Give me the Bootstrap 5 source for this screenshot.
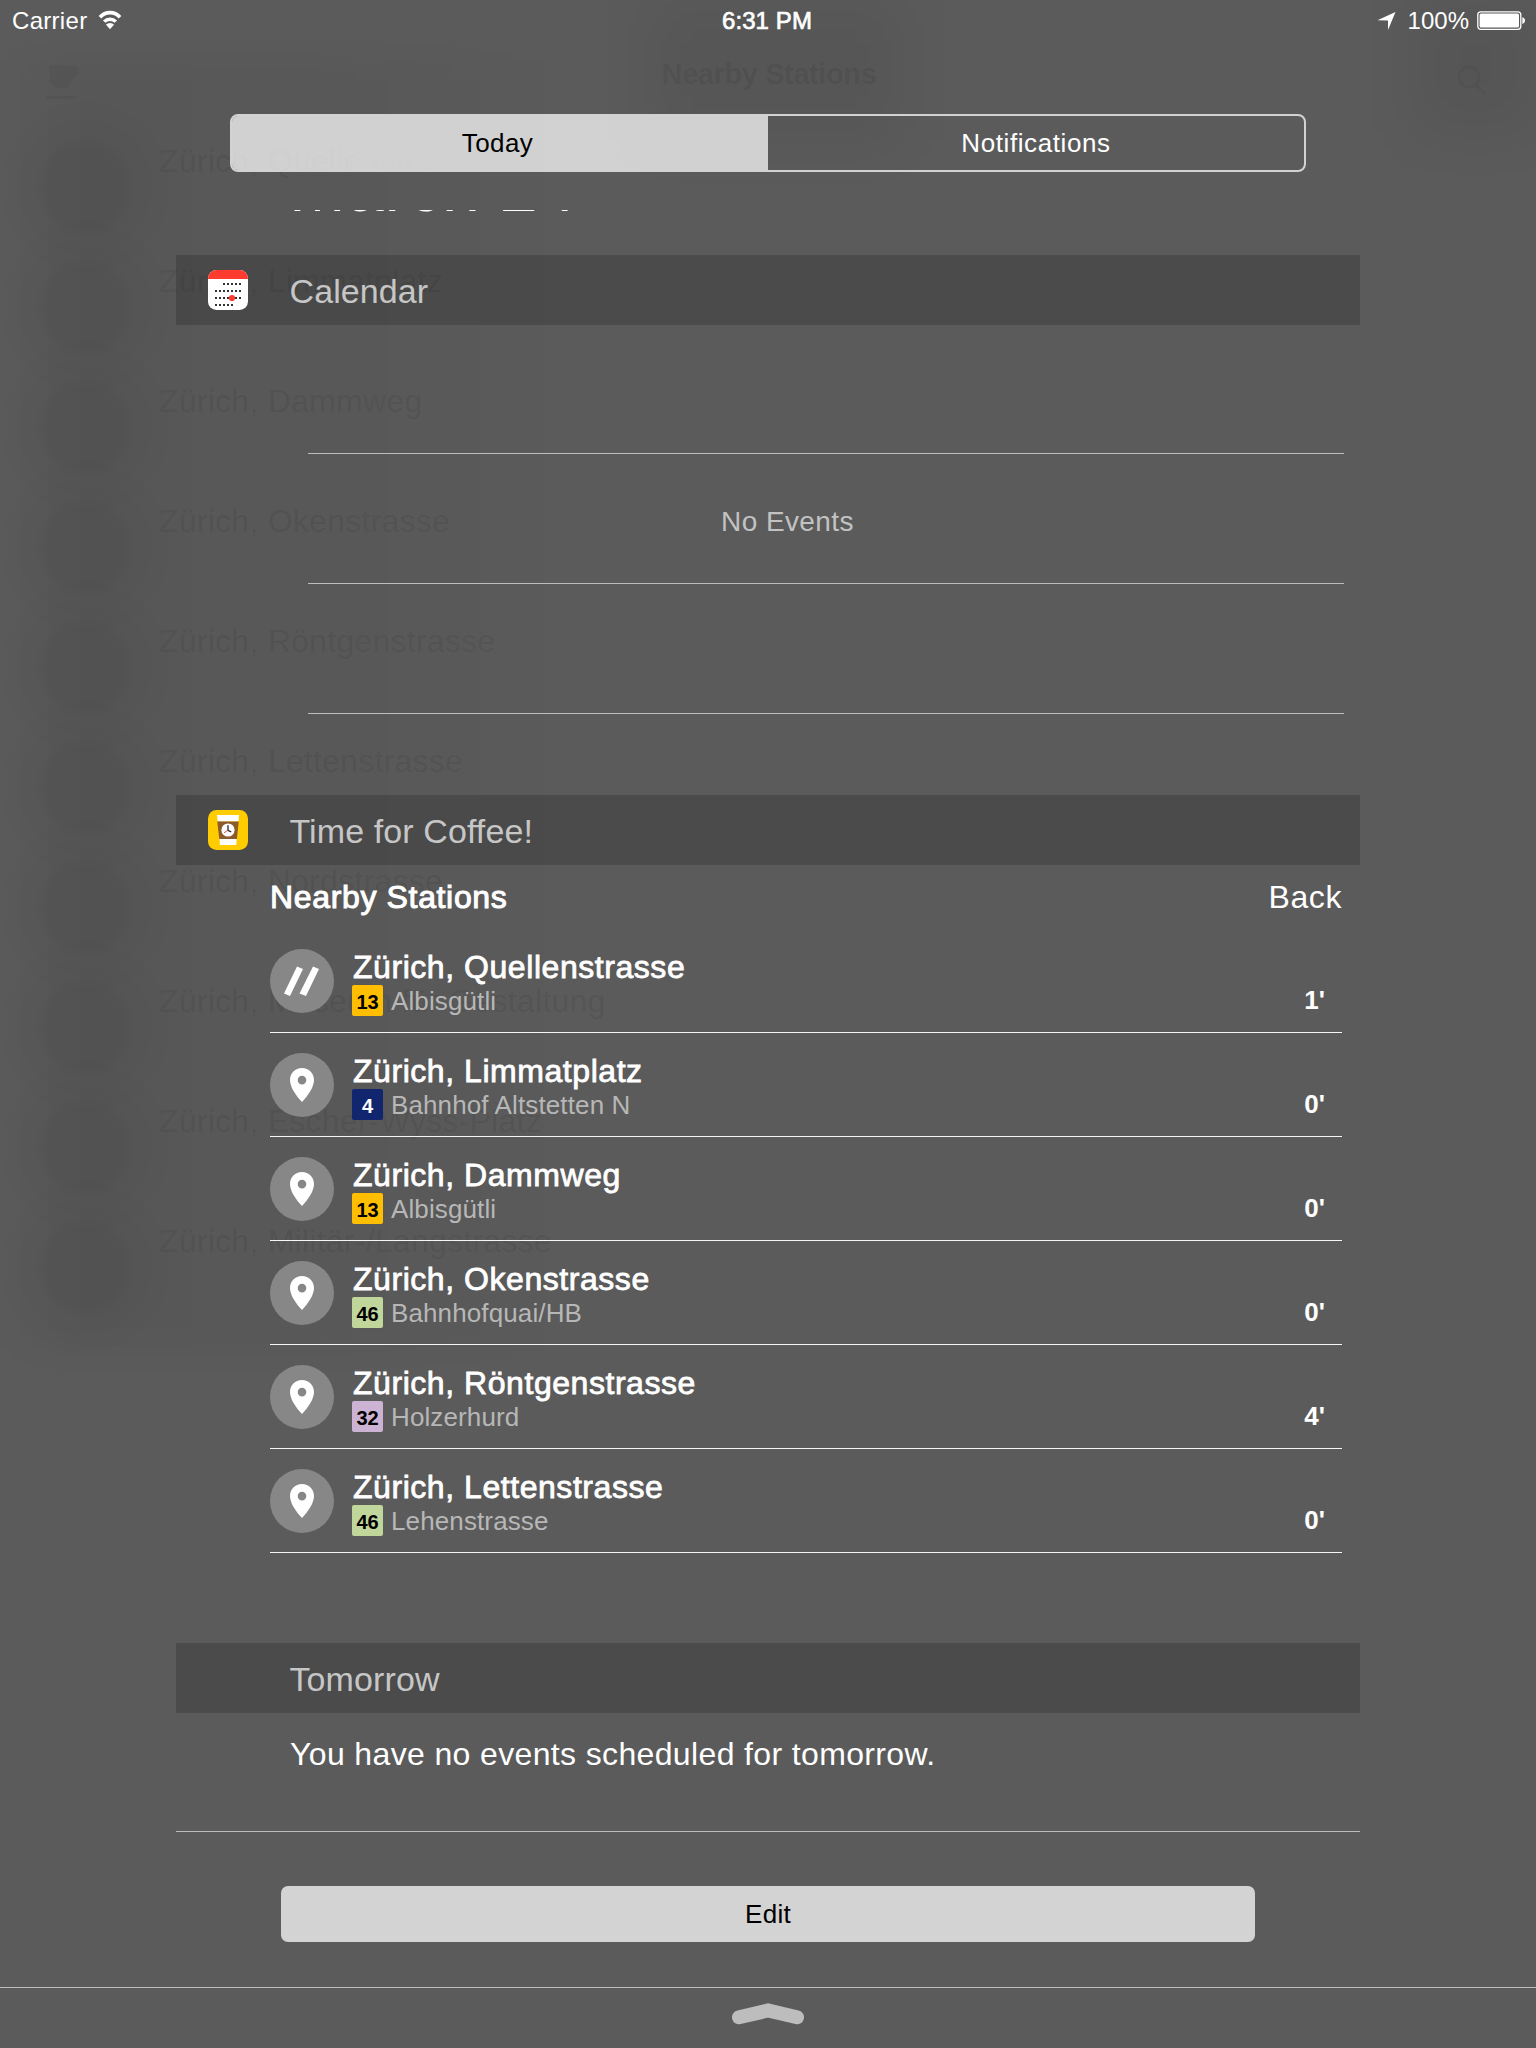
<!DOCTYPE html>
<html lang="en">
<head>
<meta charset="utf-8">
<meta name="viewport" content="width=device-width, initial-scale=1">
<title>Today</title>
<link href="https://cdn.jsdelivr.net/npm/bootstrap@5.3.0/dist/css/bootstrap.min.css" rel="stylesheet">
<style>
  body { font-family: "Liberation Sans", Arial, sans-serif; background: #5b5b5b; color: #fff; height: 2048px; overflow: hidden; }
  .screen { width: 1536px; height: 2048px; }
  .front { z-index: 1; }

  /* App behind the panel, almost hidden by the dark glass */
  .behind { inset: 0; color: rgba(0,0,0,.085); }
  .behind-bar { height: 127px; padding: 60px 48px 0 46px; }
  .behind-bar svg { opacity: .45; }
  .behind-title { font-size: 29px; font-weight: 700; line-height: 28px; letter-spacing: -.4px; padding-left: 0; }
  .behind-row { height: 120px; padding-left: 40px; }
  .behind-dot { width: 90px; height: 92px; margin-top: 14px; border-radius: 50%; background: rgba(0,0,0,.05); filter: blur(5px); box-shadow: 0 0 36px 24px rgba(0,0,0,.024); }
  .behind-name { margin-left: 29px; font-size: 32px; line-height: 36px; padding-top: 16px; height: 60px; letter-spacing: .25px; }
  .shade { left: 0; top: 60px; width: 560px; height: 1290px; background: linear-gradient(90deg, transparent, rgba(0,0,0,.035) 14%, rgba(0,0,0,.03) 55%, transparent); filter: blur(14px); }
  .shade-top { left: 650px; top: 0; width: 250px; height: 140px; background: rgba(0,0,0,.05); filter: blur(26px); }
  .shade-corner { right: 0; top: 0; width: 120px; height: 130px; background: rgba(0,0,0,.06); filter: blur(26px); }

  .status { height: 40px; padding: 2px 11px 0 12px; font-size: 24px; line-height: 38px; }
  .carrier { letter-spacing: .3px; }
  .clock { -webkit-text-stroke: .7px #fff; letter-spacing: .1px; padding-right: 3px; }

  .segment { width: 1076px; height: 58px; margin-top: 74px; border: 2px solid #d2d2d2; border-radius: 8px; background-clip: padding-box; font-size: 26px; line-height: 54px; }
  .segment-on { background: rgba(255,255,255,.725); color: #000; letter-spacing: .4px; }
  .segment-on span { padding-right: 5px; }
  .segment-off { letter-spacing: .6px; }

  .date-slice { height: 3px; margin: 38px 0 42px 289px; font-size: 68px; line-height: 68px; }
  .date-slice div { margin-top: -57px; letter-spacing: .5px; }

  .panel { width: 1184px; }
  .section-head { height: 70px; background: rgba(0,0,0,.17); color: #c6c6c6; font-size: 34px; line-height: 70px; padding-left: 32px; }
  .section-head span { padding-top: 2px; letter-spacing: .1px; }
  .section-icon { width: 40px; height: 40px; margin-right: 41.5px; }

  .slots { margin: 0 16px 81px 132px; }
  .slot { height: 130px; border-bottom: 1px solid #bdbdbd; font-size: 28px; color: #c2c2c2; letter-spacing: .4px; padding: 7px 77px 0 0; }
  .slot:first-child { height: 129px; }

  .stations { margin: 0 18px 90px 94px; }
  .stations-head { height: 64px; font-size: 32px; line-height: 64px; }
  .semi { -webkit-text-stroke: 1px #fff; letter-spacing: .65px; }
  .back-link { letter-spacing: .6px; }
  .station { height: 104px; padding-top: 20px; border-bottom: 1px solid #f6f6f6; }
  .station-disc { width: 64px; height: 64px; border-radius: 50%; background: #878787; margin-right: 18px; }
  .station-disc svg { display: block; }
  .station-name { font-size: 32px; line-height: 36px; -webkit-text-stroke: .8px #fff; letter-spacing: .55px; padding-left: 1px; }
  .station-sub { height: 31px; font-size: 26px; line-height: 33px; color: #b7b7b7; letter-spacing: .12px; }
  .line-no { width: 31px; height: 31px; border-radius: 2px; margin-right: 8px; padding-top: 3px; font-size: 20px; line-height: 29px; font-weight: 700; color: #000; letter-spacing: 0; }
  .l13 { background: #ffbf00; } .l4 { background: #11266f; color: #fff; } .l46 { background: #c0d69b; } .l32 { background: #ccb2d3; }
  .mins { font-size: 26px; line-height: 31px; font-weight: 700; margin-top: 36px; padding-right: 17px; }

  .tomorrow-text { height: 119px; padding-left: 114px; font-size: 32px; line-height: 82px; letter-spacing: .36px; border-bottom: 1px solid #bdbdbd; }
  .edit-btn { width: 974px; height: 56px; margin: 54px 0 45px; padding: 0; border-radius: 7px; background: #d3d3d3; color: #000; font-size: 26px; line-height: 56px; letter-spacing: .3px; text-align: center; border: 0; }
  .grabber { border-top: 1px solid #bdbdbd; height: 61px; padding-top: 14px; }
</style>
</head>
<body>
<svg class="d-none">
  <symbol id="pin" viewBox="0 0 64 64"><path fill="#fff" fill-rule="evenodd" d="M32 15c6.900 0 12 5.200 12 11.900C44 34 38 42.500 32 49 26 42.500 20 34 20 26.900 20 20.200 25.100 15 32 15Zm0 7.800a4.300 4.300 0 1 0 0 8.600 4.300 4.300 0 0 0 0-8.600Z"/></symbol>
  <symbol id="tracks" viewBox="0 0 64 64"><path fill="#fff" d="M27 17.500 33 20 20 47 14 44.500ZM43 17.500 49 20 36 47 29.500 44.500Z"/></symbol>
</svg>

<div class="screen position-relative overflow-hidden">
  <div class="behind position-absolute" aria-hidden="true">
    <div class="shade position-absolute"></div>
    <div class="shade-top position-absolute"></div>
    <div class="shade-corner position-absolute"></div>
    <div class="behind-bar d-flex justify-content-between">
      <svg width="36" height="42" viewBox="0 0 36 42" fill="currentColor"><path d="M3 5H31L33 14 26 19 22 28H10L4 22ZM0 36H29V39H0Z"/></svg>
      <div class="behind-title">Nearby Stations</div>
      <svg width="32" height="36" viewBox="0 0 32 36" fill="none" stroke="currentColor" stroke-width="3"><circle cx="13" cy="17" r="10"/><path d="M20 25 29 34"/></svg>
    </div>
    <div class="behind-row d-flex"><div class="behind-dot"></div><div class="behind-name">Zürich, Quellenstrasse</div></div>
    <div class="behind-row d-flex"><div class="behind-dot"></div><div class="behind-name">Zürich, Limmatplatz</div></div>
    <div class="behind-row d-flex"><div class="behind-dot"></div><div class="behind-name">Zürich, Dammweg</div></div>
    <div class="behind-row d-flex"><div class="behind-dot"></div><div class="behind-name">Zürich, Okenstrasse</div></div>
    <div class="behind-row d-flex"><div class="behind-dot"></div><div class="behind-name">Zürich, Röntgenstrasse</div></div>
    <div class="behind-row d-flex"><div class="behind-dot"></div><div class="behind-name">Zürich, Lettenstrasse</div></div>
    <div class="behind-row d-flex"><div class="behind-dot"></div><div class="behind-name">Zürich, Nordstrasse</div></div>
    <div class="behind-row d-flex"><div class="behind-dot"></div><div class="behind-name">Zürich, Museum für Gestaltung</div></div>
    <div class="behind-row d-flex"><div class="behind-dot"></div><div class="behind-name">Zürich, Escher-Wyss-Platz</div></div>
    <div class="behind-row d-flex"><div class="behind-dot"></div><div class="behind-name">Zürich, Militär-/Langstrasse</div></div>
  </div>

  <div class="front position-relative d-flex flex-column align-items-center">
    <header class="status d-flex w-100">
      <div class="col d-flex">
        <span class="carrier">Carrier</span>
        <svg class="ms-2" width="30" height="38" viewBox="0 0 30 38" fill="none" stroke="#fff">
          <path stroke-width="3.600" d="M5 15.200a13.300 13.300 0 0 1 20 0"/><path stroke-width="3.400" d="M9.200 19.700a8 8 0 0 1 11.600 0"/>
          <path fill="#fff" stroke="none" d="M15 27.300 10.900 22.600a6 6 0 0 1 8.200 0Z"/>
        </svg>
      </div>
      <div class="clock">6:31 PM</div>
      <div class="col d-flex justify-content-end">
        <svg width="20" height="38" viewBox="0 0 20 38"><path fill="#fff" d="M19.500 10 12 28V18.500L1.500 18.200Z"/></svg>
        <span class="ms-2 ps-1">100%</span>
        <svg class="ms-2" width="48" height="38" viewBox="0 0 48 38"><rect x=".8" y="9.800" width="43" height="17.500" rx="3" fill="none" stroke="#fff" stroke-width="1.300"/><rect x="2.600" y="11.600" width="39.400" height="13.900" rx="1.500" fill="#fff"/><path fill="#fff" d="M45.300 15.300q2.700 .6 2.700 3.300t-2.700 3.300Z"/></svg>
      </div>
    </header>

    <div class="segment d-flex overflow-hidden text-center">
      <div class="segment-on w-50"><span>Today</span></div>
      <div class="segment-off w-50">Notifications</div>
    </div>

    <div class="date-slice align-self-start overflow-hidden"><div>March 24</div></div>

    <main class="panel">
      <section>
        <div class="section-head d-flex align-items-center">
          <svg class="section-icon" viewBox="0 0 40 40">
            <rect width="40" height="40" rx="8.500" fill="#fff"/><path fill="#ff3b30" d="M0 9V8.500A8.500 8.500 0 0 1 8.500 0H31.500A8.500 8.500 0 0 1 40 8.500V9Z"/>
            <g stroke="#333" stroke-width="2" stroke-dasharray="2 2"><path d="M15 14H33M7 21H33M7 28H33M7 35H25"/></g>
            <circle cx="24" cy="28" r="3.100" fill="#ff3b30"/>
          </svg>
          <span>Calendar</span>
        </div>
        <div class="slots">
          <div class="slot"></div>
          <div class="slot d-flex align-items-center justify-content-center">No Events</div>
          <div class="slot"></div>
        </div>
      </section>

      <section>
        <div class="section-head d-flex align-items-center">
          <svg class="section-icon" viewBox="0 0 40 40">
            <rect width="40" height="40" rx="8.500" fill="#fc0"/>
            <path fill="#fff" d="M9 5H31L30.500 11.500H9.700ZM11.500 29H28.700L28.300 35H12Z"/>
            <path fill="#8c5a2b" d="M9.300 11.500H30.700L28.900 29H11.300Z"/>
            <circle cx="20" cy="20" r="6.600" fill="#fff"/>
            <path fill="none" stroke="#222" stroke-width="1.300" d="M20 15.300V20.300L23.200 22"/><path stroke="#e33" stroke-width=".8" d="M20 20.300 16 22.800"/>
          </svg>
          <span>Time for Coffee!</span>
        </div>
        <div class="stations">
          <div class="stations-head d-flex justify-content-between"><span class="semi">Nearby Stations</span><span class="back-link">Back</span></div>
          <div class="station d-flex">
            <div class="station-disc"><svg width="64" height="64"><use href="#tracks"/></svg></div>
            <div class="flex-grow-1"><div class="station-name">Zürich, Quellenstrasse</div><div class="station-sub d-flex"><span class="line-no l13 text-center">13</span>Albisgütli</div></div>
            <div class="mins">1'</div>
          </div>
          <div class="station d-flex">
            <div class="station-disc"><svg width="64" height="64"><use href="#pin"/></svg></div>
            <div class="flex-grow-1"><div class="station-name">Zürich, Limmatplatz</div><div class="station-sub d-flex"><span class="line-no l4 text-center">4</span>Bahnhof Altstetten N</div></div>
            <div class="mins">0'</div>
          </div>
          <div class="station d-flex">
            <div class="station-disc"><svg width="64" height="64"><use href="#pin"/></svg></div>
            <div class="flex-grow-1"><div class="station-name">Zürich, Dammweg</div><div class="station-sub d-flex"><span class="line-no l13 text-center">13</span>Albisgütli</div></div>
            <div class="mins">0'</div>
          </div>
          <div class="station d-flex">
            <div class="station-disc"><svg width="64" height="64"><use href="#pin"/></svg></div>
            <div class="flex-grow-1"><div class="station-name">Zürich, Okenstrasse</div><div class="station-sub d-flex"><span class="line-no l46 text-center">46</span>Bahnhofquai/HB</div></div>
            <div class="mins">0'</div>
          </div>
          <div class="station d-flex">
            <div class="station-disc"><svg width="64" height="64"><use href="#pin"/></svg></div>
            <div class="flex-grow-1"><div class="station-name">Zürich, Röntgenstrasse</div><div class="station-sub d-flex"><span class="line-no l32 text-center">32</span>Holzerhurd</div></div>
            <div class="mins">4'</div>
          </div>
          <div class="station d-flex">
            <div class="station-disc"><svg width="64" height="64"><use href="#pin"/></svg></div>
            <div class="flex-grow-1"><div class="station-name">Zürich, Lettenstrasse</div><div class="station-sub d-flex"><span class="line-no l46 text-center">46</span>Lehenstrasse</div></div>
            <div class="mins">0'</div>
          </div>
        </div>
      </section>

      <section>
        <div class="section-head d-flex align-items-center"><div class="section-icon"></div><span>Tomorrow</span></div>
        <div class="tomorrow-text">You have no events scheduled for tomorrow.</div>
      </section>
    </main>

    <button type="button" class="btn edit-btn">Edit</button>
    <footer class="grabber w-100 d-flex justify-content-center align-items-start">
      <svg width="72" height="24" viewBox="0 0 72 24"><path fill="none" stroke="#bdbdbd" stroke-width="14" stroke-linecap="round" d="M7 15.300 36 8.500 65 15.300"/></svg>
    </footer>
  </div>
</div>
<script src="https://cdn.jsdelivr.net/npm/bootstrap@5.3.0/dist/js/bootstrap.bundle.min.js"></script>
</body>
</html>
